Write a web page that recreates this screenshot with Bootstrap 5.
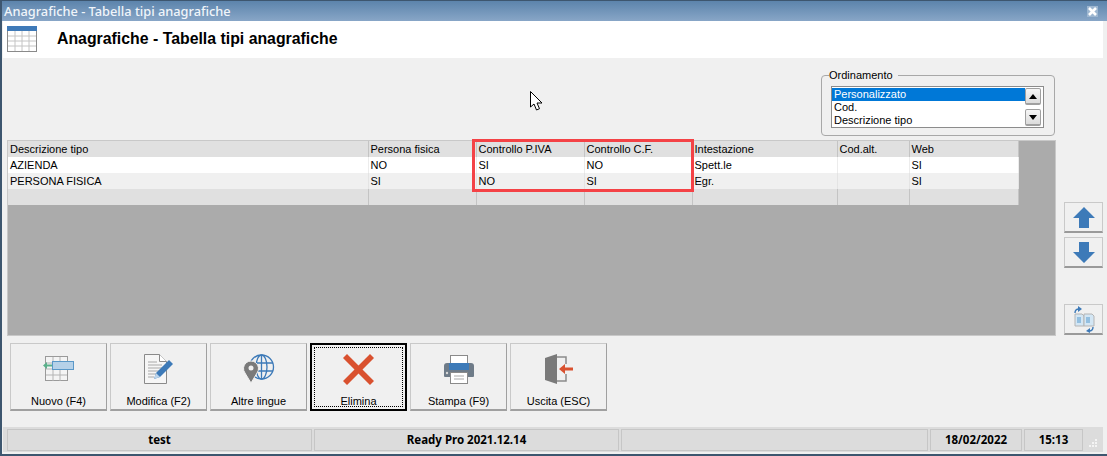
<!DOCTYPE html>
<html lang="it">
<head>
    <meta charset="UTF-8">
    <meta name="viewport" content="width=device-width, initial-scale=1.0">
    <title>Anagrafiche - Tabella tipi anagrafiche</title>
    <link href="https://cdn.jsdelivr.net/npm/bootstrap@5.3.0/dist/css/bootstrap.min.css" rel="stylesheet">
    <style>
        html, body { height: 100%; overflow: hidden; background: #f0f0f0; }
        body { font-family: "Liberation Sans", Arial, sans-serif; font-size: 11px; color: #000; }
        .finestra { width: 1107px; height: 456px; border: solid #3d566f; border-width: 1px 0 2px 2px; background: #f0f0f0; }
        .barra-titolo { height: 20px; padding: 0 2px; background: linear-gradient(#5c84ac, #88a6c7); color: #f0f5fa; font: 500 12.8px/21px "Noto Sans", sans-serif; }
        .chiudi { width: 11px; height: 11px; margin-right: 7px; background: #9db6d0; }
        .testata { height: 37px; margin: 0 4px 0 1px; background: #fff; padding: 0 0 2px 4px; }
        .testata h1 { margin: 0 0 0 19px; font: bold 15.85px "Liberation Sans", Arial, sans-serif; color: #000; }
        .zona-ordine { height: 82px; padding: 11px 52px 0 0; }
        .gruppo { width: 234px; height: 67px; margin: 0; padding: 0 9px; border: 1px solid #a8a8a8; border-radius: 4px; }
        .gruppo legend { float: none; width: auto; margin: 0 0 0 -2px; padding: 0 5px 0 0; font-size: 11px; line-height: 13px; }
        .lista-ordine { width: 213px; height: 42px; margin-top: 4px; padding: 1px 0; border: 1px solid #8c8c8c; background: #fff; }
        .voci { width: 193px; border-radius: 0; }
        .voci .list-group-item { padding: 0 2px; border: 0; height: 13px; background: transparent; color: #000; font-size: 11px; line-height: 13px; }
        .voci .list-group-item.active { background: #0078d7; color: #fff; }
        .freccette { width: 18px; padding-right: 1px; }
        .freccetta { width: 16px; height: 17px; border: 1px solid #a0a0a0; border-bottom-width: 2px; border-radius: 2px; background: linear-gradient(#f6f6f6, #dcdcdc); }
        .zona-griglia { height: 196px; margin-left: 5px; }
        .griglia-box { width: 1049px; height: 196px; background: #ababab; border: 1px solid #c8c8c8; position: relative; }
        .griglia { width: 1011px; margin: 0; table-layout: fixed; border-collapse: collapse; font-size: 11px; }
        .griglia th, .griglia td { height: 16px; padding: 1px 2px 0; font-weight: 400; line-height: 15px; color: #000; border: 0; border-right: 1px solid #c4c4c4; box-shadow: none; white-space: nowrap; overflow: hidden; }
        .griglia th { background: #e0e0e0; }
        .griglia tbody tr:nth-child(1) td { background: #fff; border-right-color: #ececec; }
        .griglia tbody tr:nth-child(2) td { background: #f0f0f0; border-right-color: #e4e4e4; }
        .griglia tbody tr:nth-child(3) td { background: #e0e0e0; }
        .griglia th:nth-child(1) { width: 360px; }
        .griglia th:nth-child(2), .griglia th:nth-child(3), .griglia th:nth-child(4) { width: 108px; }
        .griglia th:nth-child(5) { width: 145px; }
        .griglia th:nth-child(6) { width: 72px; }
        .evidenza { position: absolute; left: 464px; top: -2px; width: 222px; height: 53px; border: 3px solid #f44246; pointer-events: none; }
        .colonna-frecce { width: 39px; margin-left: 8px; padding-top: 62px; }
        .btn-lato { width: 39px; height: 31px; padding: 0; border: 1px solid #c9c9c9; border-bottom: 2px solid #9a9a9a; border-radius: 0; background: #f0f0f0; display: flex; align-items: center; justify-content: center; }
        .btn-staccato { margin-top: 36px; }
        .zona-comandi { padding: 7px 0 0 8px; height: 91px; }
        .btn-comando { width: 97px; height: 68px; margin-right: 3px; padding: 0; border: 1px solid #c9c9c9; border-right-color: #a0a0a0; border-bottom: 2px solid #a0a0a0; border-radius: 0; background: #f0f0f0; color: #000; font-size: 11px; line-height: 13px; }
        .btn-comando:hover { background: #f0f0f0; color: #000; }
        .btn-comando .etichetta { padding-top: 1px; }
        .btn-comando .icona { height: 50px; }
        .btn-attivo { border: 2px solid #000; position: relative; }
        .btn-attivo .icona { height: 49px; }
        .btn-attivo::after { content: ""; position: absolute; inset: 2px; border: 1px dotted #000; pointer-events: none; }
        .barra-stato { height: 25px; margin: 0 4px 0 1px; padding: 2px 0 0 4px; background: #dcdcdc; font: bold 11.5px "Noto Sans", sans-serif; gap: 2px; }
        .pannello { height: 22px; line-height: 20px; border: 1px solid #c6c6c6; text-align: center; }
        .pannello-grande { width: 305px; }
        .pannello-largo { width: 307px; }
        .pannello-data { width: 92px; }
        .pannello-ora { width: 59px; }
        .maniglia { width: 12px; height: 12px; margin: 7px 0 0 2px; }
        .puntatore { position: absolute; left: 528px; top: 90px; }
    </style>
</head>
<body>
    <div class="finestra d-flex flex-column position-relative">
        <div class="barra-titolo d-flex justify-content-between align-items-center">
            <span>Anagrafiche - Tabella tipi anagrafiche</span>
            <svg class="chiudi" viewBox="0 0 11 11"><path d="M2 2l7 7M9 2l-7 7" stroke="#fff" stroke-width="2.6" fill="none"/></svg>
        </div>
        <div class="testata d-flex align-items-center">
            <svg width="31" height="26" viewBox="0 0 31 26" class="flex-shrink-0">
                <rect x=".5" y=".5" width="29" height="25" fill="#fff" stroke="#8a8a8a"/>
                <rect x="0" y="0" width="30" height="5" fill="#3f7ab8"/>
                <path d="M1 10h28M1 15h28M1 20h28M8 5v20M15 5v20M22 5v20" stroke="#c4c4c4" fill="none"/>
            </svg>
            <h1>Anagrafiche - Tabella tipi anagrafiche</h1>
        </div>
        <div class="zona-ordine d-flex justify-content-end">
            <fieldset class="gruppo">
                <legend>Ordinamento</legend>
                <div class="lista-ordine d-flex justify-content-between">
                    <div class="list-group voci">
                        <div class="list-group-item active">Personalizzato</div>
                        <div class="list-group-item">Cod.</div>
                        <div class="list-group-item">Descrizione tipo</div>
                    </div>
                    <div class="freccette d-flex flex-column justify-content-between">
                        <div class="freccetta d-flex align-items-center justify-content-center"><svg width="8" height="5" viewBox="0 0 8 5"><path d="M4 0l4 5H0z" fill="#000"/></svg></div>
                        <div class="freccetta d-flex align-items-center justify-content-center"><svg width="8" height="5" viewBox="0 0 8 5"><path d="M0 0h8L4 5z" fill="#000"/></svg></div>
                    </div>
                </div>
            </fieldset>
        </div>
        <div class="zona-griglia d-flex">
            <div class="griglia-box">
                <table class="table griglia">
                    <thead>
                        <tr><th>Descrizione tipo</th><th>Persona fisica</th><th>Controllo P.IVA</th><th>Controllo C.F.</th><th>Intestazione</th><th>Cod.alt.</th><th>Web</th></tr>
                    </thead>
                    <tbody>
                        <tr><td>AZIENDA</td><td>NO</td><td>SI</td><td>NO</td><td>Spett.le</td><td></td><td>SI</td></tr>
                        <tr><td>PERSONA FISICA</td><td>SI</td><td>NO</td><td>SI</td><td>Egr.</td><td></td><td>SI</td></tr>
                        <tr><td></td><td></td><td></td><td></td><td></td><td></td><td></td></tr>
                    </tbody>
                </table>
                <div class="evidenza"></div>
            </div>
            <div class="colonna-frecce d-flex flex-column">
                <button type="button" class="btn btn-lato mb-1">
                    <svg width="22" height="21" viewBox="0 0 22 21"><path d="M11 0L22 11H16V21H6V11H0z" fill="#3d7ab8"/></svg>
                </button>
                <button type="button" class="btn btn-lato">
                    <svg width="22" height="21" viewBox="0 0 22 21"><path d="M6 0H16V10H22L11 21L0 10H6z" fill="#3d7ab8"/></svg>
                </button>
                <button type="button" class="btn btn-lato btn-staccato">
                    <svg width="24" height="27" viewBox="0 0 24 27">
                        <path d="M3 8h7l2 2v10H3z" fill="#d3e6f4" stroke="#b4b4b4"/>
                        <path d="M12 8h8l2 2v10H12z" fill="#d3e6f4" stroke="#b4b4b4"/>
                        <path d="M5 11h4v6H5zM14 11h4v6h-4z" fill="#93bfe0"/>
                        <path d="M3 7C3 4 4 3 7 3" stroke="#3d7ab8" stroke-width="1.400" fill="none"/>
                        <path d="M6 0l4 3-4 3z" fill="#3d7ab8"/>
                        <path d="M21 21c0 3-1 4-4 4" stroke="#3d7ab8" stroke-width="1.400" fill="none"/>
                        <path d="M18 22l-4 3 4 2z" fill="#3d7ab8"/>
                    </svg>
                </button>
            </div>
        </div>
        <div class="zona-comandi d-flex align-items-start">
            <button type="button" class="btn btn-comando d-flex flex-column align-items-center">
                <span class="icona d-flex align-items-center">
                    <svg width="32" height="26" viewBox="0 0 32 26">
                        <rect x="2.500" y=".5" width="22" height="24" fill="#f4f4f4" stroke="#9a9a9a"/>
                        <path d="M3 7h21M3 13h21M3 19h21M10 1v24M17 1v24" stroke="#b4b4b4" fill="none"/>
                        <rect x="9.500" y="5.500" width="21" height="8" fill="#b6d1e8" stroke="#5a98c8"/>
                        <path d="M0 9.500L4 6v2.500h5v2H4V13z" fill="#5ab08a"/>
                    </svg>
                </span>
                <span class="etichetta">Nuovo (F4)</span>
            </button>
            <button type="button" class="btn btn-comando d-flex flex-column align-items-center">
                <span class="icona d-flex align-items-center">
                    <svg width="30" height="30" viewBox="0 0 30 30">
                        <path d="M.5.500h15l7 7v22H.5z" fill="#f6f6f6" stroke="#8a8a8a"/>
                        <path d="M15.500.500v7h7" fill="#fff" stroke="#8a8a8a"/>
                        <path d="M4 8h9M4 11h14M4 14h14M4 17h11M4 20h8M4 23h6" stroke="#a8a8a8" fill="none"/>
                        <path d="M10 25l2-6L25 6l4 4L16 23z" fill="#3d7ab8"/>
                        <path d="M10 25l2-6 4 4z" fill="#bcd4ea"/>
                    </svg>
                </span>
                <span class="etichetta">Modifica (F2)</span>
            </button>
            <button type="button" class="btn btn-comando d-flex flex-column align-items-center">
                <span class="icona d-flex align-items-center">
                    <svg width="32" height="30" viewBox="0 0 32 30">
                        <g fill="none" stroke="#3d7ab8" stroke-width="1.300">
                            <circle cx="18.500" cy="13" r="12"/>
                            <ellipse cx="18.500" cy="13" rx="5.500" ry="12"/>
                            <path d="M18.500 1v24M7 9h23M7 17h23"/>
                        </g>
                        <path d="M8 29L2 19a7.500 7.500 0 1 1 12 0z" fill="#7a7a7a" stroke="#f0f0f0"/>
                        <circle cx="8" cy="14" r="2.500" fill="#f0f0f0"/>
                    </svg>
                </span>
                <span class="etichetta">Altre lingue</span>
            </button>
            <button type="button" class="btn btn-comando btn-attivo d-flex flex-column align-items-center">
                <span class="icona d-flex align-items-center">
                    <svg width="31" height="31" viewBox="0 0 31 31"><path d="M4 0l11.500 11.500L27 0l4 4-11.500 11.500L31 27l-4 4-11.500-11.500L4 31l-4-4 11.500-11.500L0 4z" fill="#d9512f"/></svg>
                </span>
                <span class="etichetta">Elimina</span>
            </button>
            <button type="button" class="btn btn-comando d-flex flex-column align-items-center">
                <span class="icona d-flex align-items-center">
                    <svg width="30" height="29" viewBox="0 0 30 29">
                        <rect x="6.500" y=".5" width="17" height="9" fill="#fff" stroke="#8a8a8a"/>
                        <path d="M3 8h24a3 3 0 0 1 3 3v10a1 1 0 0 1-1 1H1a1 1 0 0 1-1-1V11a3 3 0 0 1 3-3z" fill="#6e7b88"/>
                        <rect x="5" y="8" width="20" height="7" fill="#3d7ab8"/>
                        <circle cx="3" cy="18" r="1.200" fill="#d8d8d8"/>
                        <rect x="6.500" y="17.500" width="17" height="11" fill="#fff" stroke="#8a8a8a"/>
                        <path d="M10 21h10M10 24h10" stroke="#a8a8a8"/>
                    </svg>
                </span>
                <span class="etichetta">Stampa (F9)</span>
            </button>
            <button type="button" class="btn btn-comando d-flex flex-column align-items-center">
                <span class="icona d-flex align-items-center">
                    <svg width="28" height="30" viewBox="0 0 28 30">
                        <path d="M0 4L12 0V30L0 26z" fill="#7a7a7a"/>
                        <path d="M12 3h9v7M21 20v7h-9" fill="none" stroke="#8a8a8a" stroke-width="1.500"/>
                        <path d="M14 15l6-5v3.500h8v3h-8V20z" fill="#d9512f"/>
                    </svg>
                </span>
                <span class="etichetta">Uscita (ESC)</span>
            </button>
        </div>
        <div class="barra-stato d-flex">
            <div class="pannello pannello-grande">test</div>
            <div class="pannello pannello-grande">Ready Pro 2021.12.14</div>
            <div class="pannello pannello-largo"></div>
            <div class="pannello pannello-data">18/02/2022</div>
            <div class="pannello pannello-ora">15:13</div>
            <svg class="maniglia" viewBox="0 0 12 12"><path d="M8 3h2v2H8zM5 6h2v2H5zM8 6h2v2H8zM2 9h2v2H2zM5 9h2v2H5zM8 9h2v2H8z" fill="#f4f4f4"/></svg>
        </div>
        <svg class="puntatore" width="15" height="20" viewBox="0 0 15 20"><path d="M.5.500V16l3.500-3 2.500 6 3-1.300-2.500-5.700H12z" fill="#fff" stroke="#000"/></svg>
    </div>
    <script src="https://cdn.jsdelivr.net/npm/bootstrap@5.3.0/dist/js/bootstrap.bundle.min.js"></script>
</body>
</html>
